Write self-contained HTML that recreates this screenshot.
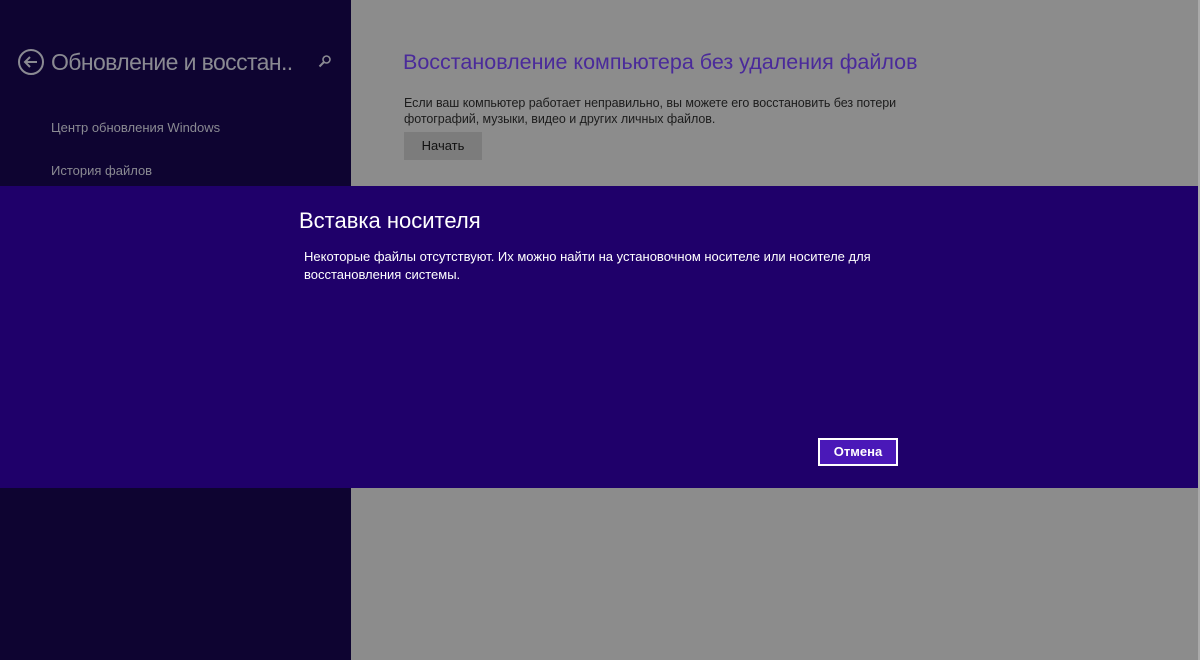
<!DOCTYPE html>
<html><head><meta charset="utf-8"><style>
body{margin:0;width:1200px;height:660px;overflow:hidden;position:relative;font-family:"Liberation Sans",sans-serif;background:#8c8c8c}
.left{position:absolute;left:0;top:0;width:351px;height:660px;background:#0e0431}
.abs{position:absolute;white-space:nowrap}
.dlg{position:absolute;left:0;top:186px;width:1198px;height:302px;background:#1f006a}
.strip{position:absolute;left:1198px;top:0;width:2px;height:660px;background:#a9a9a9}
</style></head><body>
<div class="left"></div>
<svg class="abs" style="left:17px;top:48px" width="28" height="28" viewBox="0 0 28 28"><circle cx="14" cy="14" r="12" fill="none" stroke="#8a8a92" stroke-width="2"/><path d="M20 14H8M13 9l-5 5 5 5" fill="none" stroke="#8a8a92" stroke-width="2"/></svg>
<div class="abs" style="left:51px;top:49px;font-size:23px;color:#8a8a92;letter-spacing:-0.6px">Обновление и восстан..</div>
<svg class="abs" style="left:318px;top:54px" width="14" height="14" viewBox="0 0 14 14"><circle cx="8.5" cy="5.5" r="3.5" fill="none" stroke="#8a8a92" stroke-width="1.6"/><path d="M6 8L1.5 12.5" stroke="#8a8a92" stroke-width="2"/></svg>
<div class="abs" style="left:51px;top:120px;font-size:13px;color:#8a8a92">Центр обновления Windows</div>
<div class="abs" style="left:51px;top:163px;font-size:13px;color:#8a8a92">История файлов</div>
<div class="abs" style="left:403px;top:50px;font-size:21.5px;color:#4a2a9a;letter-spacing:0px">Восстановление компьютера без удаления файлов</div>
<div class="abs" style="left:404px;top:95px;font-size:12.5px;color:#1c1c1c;line-height:16px;letter-spacing:-0.05px">Если ваш компьютер работает неправильно, вы можете его восстановить без потери<br>фотографий, музыки, видео и других личных файлов.</div>
<div class="abs" style="left:404px;top:132px;width:78px;height:28px;background:#7c7c7c;color:#111;font-size:13px;text-align:center;line-height:28px">Начать</div>
<div class="strip"></div>
<div class="dlg">
<div class="abs" style="left:299px;top:22px;font-size:22px;color:#fff">Вставка носителя</div>
<div class="abs" style="left:304px;top:62px;font-size:13px;color:#fff;line-height:18px;letter-spacing:0px">Некоторые файлы отсутствуют. Их можно найти на установочном носителе или носителе для<br>восстановления системы.</div>
<div class="abs" style="left:818px;top:252px;width:76px;height:24px;border:2px solid #fff;background:#4a18b8;color:#fff;font-size:13px;font-weight:bold;text-align:center;line-height:24px">Отмена</div>
</div>
</body></html>
